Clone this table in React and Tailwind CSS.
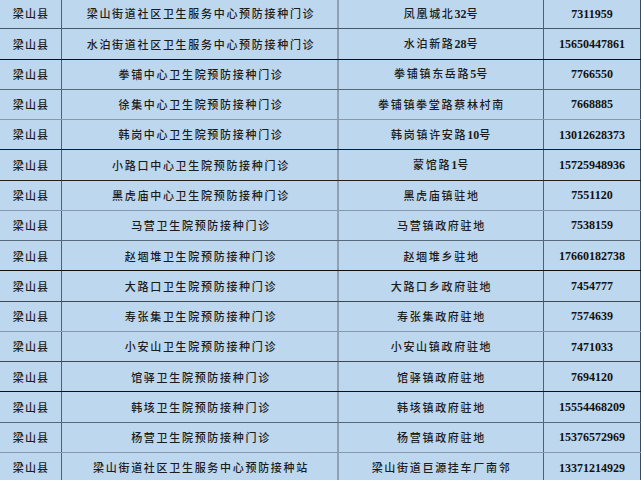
import React from "react";

const rows = [
  ["梁山街道社区卫生服务中心预防接种门诊", "凤凰城北32号", "7311959", "border-b-[#4a5866]"],
  ["水泊街道社区卫生服务中心预防接种门诊", "水泊新路28号", "15650447861", "border-b-[#101010]"],
  ["拳铺中心卫生院预防接种门诊", "拳铺镇东岳路5号", "7766550", "border-b-[#5a6977]"],
  ["徐集中心卫生院预防接种门诊", "拳铺镇拳堂路蔡林村南", "7668885", "border-b-[#8599ad]"],
  ["韩岗中心卫生院预防接种门诊", "韩岗镇许安路10号", "13012628373", "border-b-[#1a1a1a]"],
  ["小路口中心卫生院预防接种门诊", "蒙馆路1号", "15725948936", "border-b-[#222222]"],
  ["黑虎庙中心卫生院预防接种门诊", "黑虎庙镇驻地", "7551120", "border-b-[#8599ad]"],
  ["马营卫生院预防接种门诊", "马营镇政府驻地", "7538159", "border-b-[#5a6977]"],
  ["赵堌堆卫生院预防接种门诊", "赵堌堆乡驻地", "17660182738", "border-b-[#111111]"],
  ["大路口卫生院预防接种门诊", "大路口乡政府驻地", "7454777", "border-b-[#3d4955]"],
  ["寿张集卫生院预防接种门诊", "寿张集政府驻地", "7574639", "border-b-[#8599ad]"],
  ["小安山卫生院预防接种门诊", "小安山镇政府驻地", "7471033", "border-b-[#3d4955]"],
  ["馆驿卫生院预防接种门诊", "馆驿镇政府驻地", "7694120", "border-b-[#111111]"],
  ["韩垓卫生院预防接种门诊", "韩垓镇政府驻地", "15554468209", "border-b-[#5a6977]"],
  ["杨营卫生院预防接种门诊", "杨营镇政府驻地", "15376572969", "border-b-[#8599ad]"],
  ["梁山街道社区卫生服务中心预防接种站", "梁山街道巨源挂车厂南邻", "13371214929", "border-b-[#8599ad]"],
];

function Mixed({ text }) {
  const parts = text.split(/(\d+)/);
  return (
    <span>
      {parts.map((p, i) =>
        /^\d+$/.test(p) ? (
          <span
            key={i}
            className="font-bold text-[12px] tracking-normal [font-family:'Liberation_Serif',serif]"
          >
            {p}
          </span>
        ) : (
          <span key={i}>{p}</span>
        )
      )}
    </span>
  );
}

export default function App() {
  return (
    <div className="w-[641px] h-[480px] overflow-hidden bg-[#bdd7ee]">
      <div className="-mt-[1px] flex flex-col text-[#1c1c1c] text-[11px] font-medium [font-family:'Noto_Sans_CJK_SC',sans-serif]">
        {rows.map(([name, addr, tel, bc], i) => (
          <div key={i} className={`flex h-[30.28px] box-border border-b ${bc}`}>
            <div className="w-[62px] flex items-center justify-center border-r border-r-[#55606b] tracking-[1.2px] pl-[1px]">
              梁山县
            </div>
            <div className="w-[277px] flex items-center justify-center border-r-2 border-r-[#8ea2b6] tracking-[1.7px] pl-[3px]">
              {name}
            </div>
            <div className="w-[205px] flex items-center justify-center border-r border-r-[#55606b] tracking-[1.7px] pl-[1px]">
              <Mixed text={addr} />
            </div>
            <div className="w-[97px] flex items-center justify-center border-r border-r-[#3d4955] font-bold text-[12px] text-[#111] [font-family:'Liberation_Serif',serif]">
              {tel}
            </div>
          </div>
        ))}
      </div>
    </div>
  );
}
